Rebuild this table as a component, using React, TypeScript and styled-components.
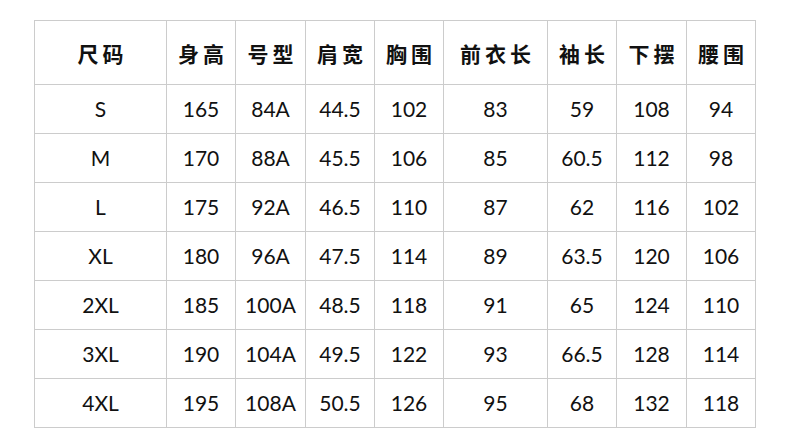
import React from "react";
import styled, { createGlobalStyle } from "styled-components";

const Global = createGlobalStyle`
  html, body { margin: 0; padding: 0; background: #ffffff; }
  body { font-family: "Lato", "Noto Sans CJK SC", sans-serif; }
`;

const Page = styled.div`
  padding: 20px 0 0 34px;
`;

const Grid = styled.div`
  display: inline-grid;
  grid-template-columns: 131px 68px 69px 68px 68px 103px 68px 69px 68px;
  grid-template-rows: 63px repeat(7, 48px);
  gap: 1px;
  padding: 1px;
  background: #cccccc;
`;

const Cell = styled.div<{ $head?: boolean }>`
  background: #ffffff;
  display: flex;
  align-items: center;
  justify-content: center;
  color: #111111;
  font-family: ${(p) =>
    p.$head
      ? `"Noto Sans CJK SC", sans-serif`
      : `"Lato", "Noto Sans CJK SC", sans-serif`};
  font-size: 21px;
  font-weight: ${(p) => (p.$head ? 700 : 400)};
  letter-spacing: ${(p) => (p.$head ? "4px" : "0")};
  padding-left: ${(p) => (p.$head ? "4px" : "0")};
  padding-bottom: ${(p) => (p.$head ? "0" : "2px")};
`;

const headers = ["尺码", "身高", "号型", "肩宽", "胸围", "前衣长", "袖长", "下摆", "腰围"];

const rows = [
  ["S", "165", "84A", "44.5", "102", "83", "59", "108", "94"],
  ["M", "170", "88A", "45.5", "106", "85", "60.5", "112", "98"],
  ["L", "175", "92A", "46.5", "110", "87", "62", "116", "102"],
  ["XL", "180", "96A", "47.5", "114", "89", "63.5", "120", "106"],
  ["2XL", "185", "100A", "48.5", "118", "91", "65", "124", "110"],
  ["3XL", "190", "104A", "49.5", "122", "93", "66.5", "128", "114"],
  ["4XL", "195", "108A", "50.5", "126", "95", "68", "132", "118"],
];

export default function App() {
  return (
    <>
      <Global />
      <Page>
        <Grid>
          {headers.map((h) => (
            <Cell key={h} $head>
              {h}
            </Cell>
          ))}
          {rows.map((r, i) =>
            r.map((v, j) => <Cell key={`${i}-${j}`}>{v}</Cell>)
          )}
        </Grid>
      </Page>
    </>
  );
}
